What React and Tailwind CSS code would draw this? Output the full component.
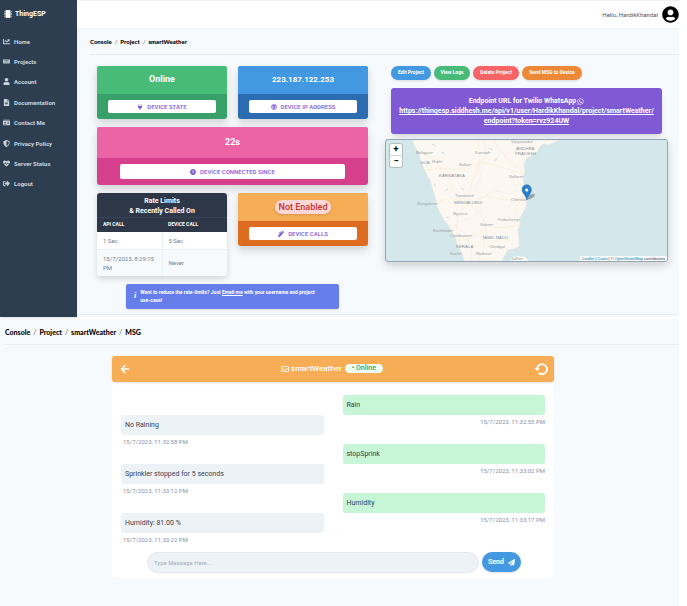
import React from "react";
import {
  FaMicrochip, FaChartLine, FaMemory, FaUser, FaFileAlt, FaIdCard, FaShieldAlt, FaHeartbeat,
  FaSignOutAlt, FaPlug, FaGlobe, FaClock, FaPenAlt, FaWhatsapp, FaRegEnvelope, FaArrowLeft,
  FaPaperPlane, FaUserCircle,
} from "react-icons/fa";

const NAV = [
  ["Home", FaChartLine],
  ["Projects", FaMemory],
  ["Account", FaUser],
  ["Documentation", FaFileAlt],
  ["Contact Me", FaIdCard],
  ["Privacy Policy", FaShieldAlt],
  ["Server Status", FaHeartbeat],
  ["Logout", FaSignOutAlt],
];

const EXCHANGES = [
  ["Rain", "15/7/2023, 11:32:55 PM", "No Raining", "15/7/2023, 11:32:58 PM"],
  ["stopSprink", "15/7/2023, 11:33:02 PM", "Sprinkler stopped for 5 seconds", "15/7/2023, 11:33:12 PM"],
  ["Humidity", "15/7/2023, 11:33:17 PM", "Humidity: 81.00 %", "15/7/2023, 11:33:22 PM"],
];

const ACTIONS = [
  ["Edit Project", "bg-[#4299e1]", "w-10"],
  ["View Logs", "bg-[#48bb78]", "w-9"],
  ["Delete Project", "bg-[#f56565]", "w-[46px]"],
  ["Send MSG to Device", "bg-[#ed8936]", "w-[60px]"],
];

const PLACES = [
  [125, 3, "Vijayawada•"], [30, 14, "Belagavi•"], [89, 14, "Kurnool•"], [46, 23, "Hubli•"],
  [73, 26, "Ballari•"], [123, 38, "Nellore•"], [69, 57, "Tumakuru•"], [31, 65, "Mangaluru•"],
  [125, 61, "Chennai"], [67, 75, "Mysuru•"], [112, 81, "Puducherry•"], [94, 86, "Salem•"],
  [47, 92, "Kozhikode•"], [64, 97, "Coimbatore•"], [103, 108, "•Dindigul"], [64, 115, "Kochi•"],
  [90, 115, "Madurai•"], [125, 120, "Jaffna•"],
];
const STATES = [
  [130, 10, "ANDHRA"], [129, 15, "PRADESH"], [34, 24, "GOA"], [53, 37, "KARNATAKA"],
  [68, 64, "BENGALURU•"], [96, 99, "TAMIL NADU"], [70, 108, "KERALA"],
];

function Breadcrumb({ items, size }) {
  return (
    <nav aria-label="Breadcrumb" className="flex h-[26px] items-center border-b border-[#e8edf2] pt-px">
      <ol className={`flex font-[Lato] leading-2 font-black text-black ${size}`}>
        {items.map((item, i) => (
          <li key={item} className="flex">
            {i > 0 && <span className="px-[3px] font-normal text-gray-600">/</span>}
            <a href="#">{item}</a>
          </li>
        ))}
      </ol>
    </nav>
  );
}

function StatCard({ value, label, Icon, top, bottom, wide, badge, size = "text-[9px]" }) {
  return (
    <section className={`overflow-hidden rounded-[3px] shadow-[0_4px_9px_rgba(0,0,0,0.16)] ${bottom} ${wide ? "col-span-2" : ""}`}>
      <div className={`flex items-center justify-center font-bold text-white ${size} ${top} ${wide ? "h-[31px]" : "h-7"}`}>
        {badge ? (
          <span className="rounded-full bg-[#fed7d7] px-1 leading-[14px] font-medium text-[#c53030] shadow">{value}</span>
        ) : (
          value
        )}
      </div>
      <div className={wide ? "px-[23px] py-[6px]" : "px-[11px] py-[6px]"}>
        <button className={`flex w-full items-center justify-center gap-1 rounded-[2px] bg-white text-[6px] font-medium text-[#805ad5] ${wide ? "h-[15px]" : "h-[13px]"}`}>
          <Icon className="size-[6px]" />
          {label}
        </button>
      </div>
    </section>
  );
}

function RateTable() {
  return (
    <section className="overflow-hidden rounded-[3px] bg-[#f7fafc] shadow-[0_3px_6px_rgba(0,0,0,0.14)]">
      <table className="w-full table-fixed text-left text-[6px] leading-[9px] text-[#718096]">
        <caption className="bg-[#2d3748] pt-[3px] pb-px text-[7px] leading-[10px] font-bold text-white">
          Rate Limits
          <br />
          &amp; Recently Called On
        </caption>
        <thead className="bg-[#2d3748] text-[5px] text-white">
          <tr className="h-[14px] border-t border-[#374357]">
            <th className="px-[6px] font-bold">API CALL</th>
            <th className="px-[6px] font-bold">DEVICE CALL</th>
          </tr>
        </thead>
        <tbody>
          <tr className="h-[18px] border-b border-[#edf2f7] bg-white">
            <td className="border-r border-[#edf2f7] px-[6px]">1 Sec</td>
            <td className="px-[6px]">5 Sec</td>
          </tr>
          <tr className="h-[26px]">
            <td className="border-r border-[#edf2f7] px-[6px]">15/7/2023, 8:29:15 PM</td>
            <td className="px-[6px]">Never</td>
          </tr>
        </tbody>
      </table>
    </section>
  );
}

function CoastMap() {
  return (
    <div className="relative h-[123px] overflow-hidden rounded-[3px] border border-[#94a5b5] bg-[#d4e8eb] shadow-[0_4px_8px_rgba(0,0,0,0.16)]">
      <svg viewBox="0 0 281 121" preserveAspectRatio="xMidYMid slice" className="size-full" role="img" aria-label="Map of southern India">
        <path
          d="M26 0 L29 7 33 13 34 19 37 27 41 35 44 40 46 48 49 57 51 66 54 73 58 80 62 85 66 92 69 98 72 107 76 113 78 121 H116 L119 115 122 110 128 109 133 107 133 96 132 90 134 85 134 78 137 73 140 67 141 58 140 50 138 45 137 38 139 32 138 24 141 18 147 15 151 12 154 7 157 4 162 5 167 3 174 0Z"
          fill="#fcf8f1" stroke="#e3e2da" strokeWidth=".6"
        />
        <path d="M124 121 L126 117 133 116 139 117 143 121Z" fill="#fcf8f1" />
        <g fill="none" stroke="#f8ead4" strokeWidth=".6">
          <path d="M34 10 L50 22 62 38 68 52 82 63 96 76 101 92 97 108 92 121" />
          <path d="M82 63 L100 56 120 60 140 58 M82 63 L72 76 70 92 76 108" />
          <path d="M92 0 L94 18 88 36 84 50 82 63 M137 32 L122 20 112 8 108 0" />
          <path d="M49 62 L64 58 82 63 M133 85 L118 88 101 86 86 98 70 101 M134 78 L128 68 138 58" />
          <path d="M40 30 L56 28 74 30 96 22 118 28 137 34" />
        </g>
        <path d="M98 0 L100 14 92 26 96 38 88 46 96 58 108 50 122 54 132 50 M74 82 L84 78 96 70 94 58 M70 86 L80 96 86 108 84 121" fill="none" stroke="#f3e5e6" strokeWidth=".6" />
        <g fill="none" stroke="#cfe4ea" strokeWidth="1.2">
          <path d="M46 4 l4 2 M102 8 l5 2 M48 44 l2 3 M59 51 l3 -2 M75 48 l3 2 M60 77 l3 1 M108 21 l4 -3 M56 12 l3 2" />
        </g>
        <g fill="#989fa4" fontFamily="Liberation Sans, sans-serif" fontSize="4">
          {PLACES.map(([x, y, name]) => <text key={name} x={x} y={y}>{name}</text>)}
        </g>
        <g fill="#8a949c" fontFamily="Liberation Sans, sans-serif" fontSize="4.4">
          {STATES.map(([x, y, name]) => <text key={name} x={x} y={y}>{name}</text>)}
        </g>
        <path d="M141 60 L144 55 Q148 52 149 55 Q148 58 141 60Z" fill="#536067" opacity=".5" />
        <path d="M141 60 C139 54 136 53 136 49.500 A4.700 4.700 0 0 1 145.400 49.500 C145.400 53 142.500 55 141 60Z" fill="#2a81cb" stroke="#2369a5" strokeWidth=".5" />
        <circle cx="140.700" cy="50" r="1.600" fill="#fff" />
      </svg>
      <div className="absolute top-1 left-1 flex w-[12px] flex-col divide-y divide-gray-300 rounded-[2px] bg-white text-center text-[9px] leading-[11px] font-bold text-black shadow-[0_0_0_1px_rgba(0,0,0,0.18)]">
        <button aria-label="Zoom in">+</button>
        <button aria-label="Zoom out">−</button>
      </div>
      <p className="absolute right-0 bottom-0 bg-white/80 px-[2px] font-['Liberation_Sans'] text-[4px] leading-[5px] text-gray-700">
        <a href="#" className="text-[#0078a8]">Leaflet</a> | <a href="#" className="text-[#0078a8]">Carto</a> | ©{" "}
        <a href="#" className="text-[#0078a8]">OpenStreetMap</a> contributors
      </p>
    </div>
  );
}

function Dashboard() {
  return (
    <div className="flex">
      <aside className="w-[77px] shrink-0 bg-[#2d3e50] text-[#cbd5e0] shadow">
        <h1 className="flex h-[31px] items-center gap-[3px] pb-[3px] pl-1 text-[7px] font-bold text-white">
          <FaMicrochip className="size-2" />
          ThingESP
        </h1>
        <ul className="grid h-[163px] grid-rows-8 pl-[3px] text-[6px] font-bold">
          {NAV.map(([label, Icon]) => (
            <li key={label} className="flex items-center">
              <a href="#" className="flex items-center gap-1">
                <Icon className="size-[7px]" />
                {label}
              </a>
            </li>
          ))}
        </ul>
      </aside>
      <div className="min-w-0 grow pb-[2px]">
        <header className="flex h-[29px] items-center justify-end gap-1 border-y border-[#edf2f7] bg-white pb-px text-[6px] text-gray-600">
          Hello, HardikKhandal
          <FaUserCircle className="size-[17px] text-black" />
        </header>
        <div className="pl-[13px]">
          <Breadcrumb size="text-[6px]" items={["Console", "Project", "smartWeather"]} />
        </div>
        <main className="grid grid-cols-[271fr_283fr] items-start gap-[17px] border-b border-[#e8edf2] pt-[11px] pr-[11px] pb-[5px] pl-5">
          <div>
            <div className="grid grid-cols-2 items-start gap-x-[11px] gap-y-[8px]">
              <StatCard value="Online" label="DEVICE STATE" Icon={FaPlug} top="bg-[#48bb78]" bottom="bg-[#38a169]" />
              <StatCard value="223.187.122.253" size="text-[8px]" label="DEVICE IP ADDRESS" Icon={FaGlobe} top="bg-[#4299e1]" bottom="bg-[#2b6cb0]" />
              <StatCard wide value="22s" label="DEVICE CONNECTED SINCE" Icon={FaClock} top="bg-[#ed64a6]" bottom="bg-[#d53f8c]" />
              <RateTable />
              <StatCard badge value="Not Enabled" label="DEVICE CALLS" Icon={FaPenAlt} top="bg-[#f6ad55]" bottom="bg-[#dd6b20]" />
            </div>
            <aside className="mx-[29px] mt-2 flex h-[25px] items-center gap-1 rounded-[2px] bg-[#667eea] px-2 text-[5px] leading-2 font-bold text-white shadow">
              <i className="font-['Liberation_Serif'] text-[8px]">i</i>
              <p>
                Want to reduce the rate-limits? Just <a href="#" className="underline">Email me</a> with your username and project <span className="inline-block">use-case!</span>
              </p>
            </aside>
          </div>
          <div>
            <div className="flex gap-[3px] px-[6px] text-[5px] font-bold text-white">
              {ACTIONS.map(([label, color, width]) => (
                <button key={label} className={`h-[14px] rounded-full whitespace-nowrap shadow ${color} ${width}`}>{label}</button>
              ))}
            </div>
            <section className="mx-[6px] mt-2 rounded-[3px] bg-[#805ad5] px-[2px] py-2 text-center text-[7px] leading-[10px] font-bold text-white shadow-md">
              <h2 className="flex items-center justify-center gap-px">Endpoint URL for Twilio WhatsApp <FaWhatsapp /></h2>
              <a href="#" className="underline">
                https://thingesp.siddhesh.me/api/v1/user/HardikKhandal/project/smartWeather/<wbr />endpoint?token=rvz924UW
              </a>
            </section>
            <div className="mt-[5px]"><CoastMap /></div>
          </div>
        </main>
      </div>
    </div>
  );
}

function Message({ text, time, sent }) {
  return (
    <li className={`h-[49px] ${sent ? "text-right" : "mt-5 -mb-5"}`}>
      <p className={`h-5 rounded-[3px] px-1 text-left leading-5 text-gray-700 ${sent ? "bg-[#c6f6d5]" : "bg-[#edf2f7]"}`}>{text}</p>
      <time className={`block text-[6px] leading-[13px] text-[#8492a8] ${sent ? "" : "pl-[2px]"}`}>{time}</time>
    </li>
  );
}

function Messages() {
  return (
    <div className="border-t-2 border-white pb-7">
      <div className="pl-[5px]">
        <Breadcrumb size="text-[7px]" items={["Console", "Project", "smartWeather", "MSG"]} />
      </div>
      <main className="mt-[11px] mr-[125px] ml-28 rounded-[3px] bg-white">
        <header className="flex h-[26px] items-center justify-between rounded-[3px] bg-[#f6ad55] pr-[6px] pl-2 text-white shadow">
          <button aria-label="Back"><FaArrowLeft className="size-[10px]" /></button>
          <h2 className="flex items-center gap-[2px] text-[8px] font-medium">
            <FaRegEnvelope /> smartWeather
            <span className="ml-px rounded-full bg-[#f0fff4] px-[7px] text-[7px] leading-[9px] text-[#38a169]">• Online</span>
          </h2>
          <button aria-label="Refresh">
            <svg viewBox="0 0 14 14" className="size-[14px]" fill="none" stroke="currentColor">
              <path d="M3 7 A5 5 0 1 1 4.800 11" strokeWidth="1.900" />
              <path d="M0.500 6 H5.800 L3.100 9Z" fill="currentColor" stroke="none" />
            </svg>
          </button>
        </header>
        <ul className="grid grid-cols-2 gap-x-[19px] px-[9px] pt-[13px] pb-[10px] text-[7px]">
          {EXCHANGES.map(([out, outTime, reply, replyTime]) => (
            <React.Fragment key={out}>
              <Message text={reply} time={replyTime} />
              <Message sent text={out} time={outTime} />
            </React.Fragment>
          ))}
        </ul>
        <form className="flex items-center gap-[3px] pr-[33px] pb-[5px] pl-[35px]">
          <input
            aria-label="Message"
            placeholder="Type Message Here..."
            className="h-[21px] min-w-0 grow rounded-full border border-[#e2e8f0] bg-[#edf2f7] px-[6px] text-[6px] placeholder:text-[#a0aec0]"
          />
          <button type="button" className="flex h-5 w-[39px] items-center justify-center gap-1 rounded-full bg-[#4299e1] text-[7px] font-bold text-white shadow">
            Send <FaPaperPlane />
          </button>
        </form>
      </main>
    </div>
  );
}

export default function App() {
  return (
    <div className="bg-white pr-2 font-[Roboto]">
      <div className="bg-[#f7fafc]">
        <Dashboard />
        <Messages />
      </div>
    </div>
  );
}
